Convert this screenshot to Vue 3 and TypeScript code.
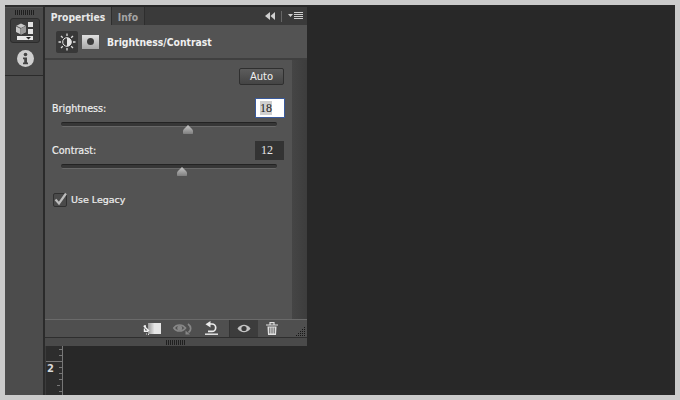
<script setup lang="ts">
const sliders = [
  { label: 'Brightness:', value: '18', pos: 122, active: true },
  { label: 'Contrast:', value: '12', pos: 116, active: false },
]
const ticks = [0, 1, 2, 3, 4, 5, 6, 7]
</script>

<template>
  <div class="frame">
    <aside class="dock">
      <div class="dock-top">
        <div class="grip dock-grip"></div>
        <div class="dock-btn">
          <svg width="20" height="18" viewBox="0 0 20 18">
            <path d="M1 4 6 1.500 11 4v6l-5 2.500L1 10z" fill="#c8c8c8" />
            <path d="M1 4 6 6.500 11 4M6 6.500v6" fill="none" stroke="#555" stroke-width="1" />
            <path d="M6 6.500 11 4v6l-5 2.500z" fill="#9a9a9a" />
            <rect x="13" y="0" width="5" height="5" fill="#e4e4e4" />
            <rect x="13" y="7" width="5" height="5" fill="#e4e4e4" />
            <rect x="2" y="14" width="16" height="4" fill="#e8e8e8" />
            <path d="M11 15h5l-2.500 2.500z" fill="#222" />
          </svg>
        </div>
        <svg class="info" width="17" height="17" viewBox="0 0 17 17">
          <circle cx="8.500" cy="8.500" r="8.500" fill="#cfcfcf" />
          <circle cx="8.500" cy="4.500" r="1.800" fill="#444" />
          <path d="M6 7.500h4v5h1v1.800H6v-1.800h1.200V9.200H6z" fill="#444" />
        </svg>
      </div>
    </aside>
    <div class="column">
      <section class="panel">
        <header class="tabs">
          <div class="tab tab-on">Properties</div>
          <div class="tab tab-off">Info</div>
          <div class="tab-fill">
            <svg width="10" height="8" viewBox="0 0 10 8"><path d="M5 0v8L0 4zM10 0v8L5.500 4z" fill="#d0d0d0" /></svg>
            <span class="tab-div"></span>
            <svg width="16" height="8" viewBox="0 0 16 8">
              <path d="M0 2h5L2.500 5z" fill="#d0d0d0" />
              <path d="M6 0.500h9M6 2.500h9M6 4.500h9M6 6.500h9" stroke="#d0d0d0" stroke-width="1" />
            </svg>
          </div>
        </header>
        <div class="title-row">
          <div class="adj-icon">
            <svg width="18" height="18" viewBox="0 0 18 18">
              <circle cx="9" cy="9" r="4.300" fill="#3a3a3a" stroke="#e4e4e4" stroke-width="1" />
              <path d="M9 4.700a4.300 4.300 0 0 1 0 8.600z" fill="#e4e4e4" />
              <path d="M9 .5v2.500M9 15v2.500M.5 9H3M15 9h2.500M3 3l1.800 1.800M13.200 13.200 15 15M3 15l1.800-1.800M13.200 4.800 15 3" stroke="#dcdcdc" stroke-width="1.300" />
            </svg>
          </div>
          <div class="mask"><span></span></div>
          <div class="title">Brightness/Contrast</div>
        </div>
        <div class="body">
          <div class="controls">
            <div class="auto-row"><div class="auto">Auto</div></div>
            <div v-for="s in sliders" :key="s.label" class="slider-block">
              <div class="slider-head">
                <span class="label">{{ s.label }}</span>
                <div class="num" :class="{ 'num-on': s.active }"><span>{{ s.value }}</span></div>
              </div>
              <div class="track">
                <svg class="thumb" :style="{ left: s.pos + 'px' }" width="10" height="9" viewBox="0 0 10 9">
                  <defs>
                    <linearGradient id="tg" x1="0" y1="0" x2="0" y2="1">
                      <stop offset="0" stop-color="#c8c8c8" />
                      <stop offset="1" stop-color="#7e7e7e" />
                    </linearGradient>
                  </defs>
                  <path d="M5 0 9 4 10 5.500V8.500L9.500 9H.5L0 8.500V5.500L1 4z" fill="url(#tg)" />
                </svg>
              </div>
            </div>
            <div class="legacy">
              <div class="check">
                <svg class="tick" width="15" height="14" viewBox="0 0 15 14">
                  <path d="M2.500 7.500 6 11.500 13 1.500" fill="none" stroke="#bcbcbc" stroke-width="2.200" />
                </svg>
              </div>
              <span class="label">Use Legacy</span>
            </div>
          </div>
          <div class="scroll"></div>
        </div>
        <footer class="foot">
          <div class="foot-icons">
            <svg class="fi first" width="18" height="13" viewBox="0 0 18 13">
              <defs>
                <linearGradient id="fg" x1="0" y1="0" x2="1" y2="0">
                  <stop offset="0" stop-color="#9a9a9a" />
                  <stop offset=".5" stop-color="#e6e6e6" />
                </linearGradient>
              </defs>
              <rect x="5" y="1" width="13" height="11" fill="url(#fg)" />
              <path d="M.8 4 6 9M1.500 6.500V9.300H5M.8 4H3" stroke="#f4f4f4" stroke-width="1.400" fill="none" />
              <path d="M3 11.500h1v1H3zM5 12h1v1H5z" fill="#dedede" />
            </svg>
            <svg class="fi second" width="19" height="12" viewBox="0 0 19 12">
              <path d="M.8 5C3.500 1 9.500 1 12.500 5 9.500 9 3.500 9 .8 5z" fill="none" stroke="#868686" stroke-width="1.700" />
              <circle cx="6.700" cy="5" r="2.500" fill="#868686" />
              <path d="M15 1c3.500 2.500 3.500 6.500.5 8.500" fill="none" stroke="#868686" stroke-width="1.700" />
              <path d="M12.500 7.500v4h4.500z" fill="#868686" />
            </svg>
            <svg class="fi third" width="15" height="14" viewBox="0 0 15 14">
              <path d="M5.500 3H8a3.700 3.700 0 0 1 0 7.400H4" fill="none" stroke="#ececec" stroke-width="1.700" />
              <path d="M6.500 0v6.500L1.500 3.200z" fill="#ececec" />
              <path d="M1 13.200h13" stroke="#ececec" stroke-width="1.400" />
            </svg>
            <div class="eye-on">
              <svg width="14" height="9" viewBox="0 0 14 9">
                <path d="M.5 4.500C4-.5 10-.5 13.500 4.500 10 9.500 4 9.500 .5 4.500z" fill="#c4c4c4" />
                <circle cx="7" cy="4.500" r="2.600" fill="#3a3a3a" />
              </svg>
            </div>
            <svg class="fi trash" width="12" height="13" viewBox="0 0 12 13">
              <path d="M0 3h12M4 2.500V.7h4v1.800" fill="none" stroke="#e0e0e0" stroke-width="1.200" />
              <path d="M1.500 4.500h9L10 13H2z" fill="#e0e0e0" />
              <path d="M3.800 5.500v6M6 5.500v6M8.200 5.500v6" stroke="#4c4c4c" stroke-width=".9" />
            </svg>
          </div>
          <svg class="resize" width="10" height="10" viewBox="0 0 10 10">
            <path d="M8 0h1v1H8zM6 2h1v1H6zM8 2h1v1H8zM4 4h1v1H4zM6 4h1v1H6zM8 4h1v1H8zM2 6h1v1H2zM4 6h1v1H4zM6 6h1v1H6zM8 6h1v1H8zM0 8h1v1H0zM2 8h1v1H2zM4 8h1v1H4zM6 8h1v1H6zM8 8h1v1H8z" fill="#161616" />
          </svg>
        </footer>
        <div class="panel-grip"><div class="grip foot-grip"></div></div>
      </section>
      <div class="ruler">
        <svg width="18" height="49" viewBox="0 0 18 49">
          <path d="M16.500 0v49" stroke="#777" stroke-width="1" />
          <path d="M0 15.500h16" stroke="#777" stroke-width="1" />
          <path v-for="t in ticks" :key="t" :d="`M${t === 6 ? 11 : 13} ${3.5 + t * 6}h3`" stroke="#777" stroke-width="1" />
        </svg>
        <span class="ruler-num">2</span>
      </div>
    </div>
  </div>
</template>

<style>
html, body { margin: 0; background: #cbcbcb; }
</style>

<style scoped>
.frame {
  box-sizing: border-box;
  margin: 5px;
  width: 670px;
  height: 390px;
  background: #282828;
  display: flex;
  font-family: "DejaVu Sans", sans-serif;
  overflow: hidden;
}
.dock {
  box-sizing: border-box;
  width: 40px;
  padding-top: 2px;
  background: #2f2f2f;
  flex: none;
  border-right: 2px solid #2b2b2b;
}
.dock-top {
  height: 67px;
  box-sizing: content-box;
  padding-left: 2px;
  background: #4a4a4a;
  border-top: 1px solid #555;
  border-bottom: 1px solid #2b2b2b;
  display: flex;
  flex-direction: column;
  align-items: center;
}
.dock::after {
  content: "";
  display: block;
  height: 319px;
  background: #4c4c4c;
}
.grip {
  background: repeating-linear-gradient(90deg, #1f1f1f 0 1px, transparent 1px 2px);
  height: 5px;
}
.dock-grip { width: 20px; margin-top: 2px; }
.dock-btn {
  width: 30px;
  height: 25px;
  box-sizing: border-box;
  margin-top: 3px;
  background: #3d3d3d;
  border: 1px solid #2c2c2c;
  border-radius: 3px;
  display: flex;
  align-items: center;
  justify-content: center;
}
.info { margin-top: 7px; }
.column { width: 262px; flex: none; display: flex; flex-direction: column; }
.panel {
  margin-top: 2px;
  height: 339px;
  background: #535353;
  display: flex;
  flex-direction: column;
  flex: none;
}
.tabs { height: 18px; display: flex; background: #3a3a3a; flex: none; }
.tab {
  font-size: 10.300px;
  font-stretch: condensed;
  font-weight: 700;
  line-height: 18px;
  padding-top: 1px;
  text-align: center;
  box-sizing: border-box;
}
.tab-on { width: 66px; background: #535353; color: #e8e8e8; }
.tab-off { width: 34px; background: #424242; color: #a4a4a4; border-left: 1px solid #2e2e2e; border-right: 1px solid #2e2e2e; }
.tab-fill {
  flex: 1;
  display: flex;
  align-items: center;
  justify-content: flex-end;
  gap: 6px;
  padding-right: 3px;
}
.tab-div { width: 1px; height: 11px; background: #666; }
.title-row {
  height: 35px;
  box-sizing: border-box;
  display: flex;
  align-items: center;
  padding-left: 11px;
  border-bottom: 2px solid #3f3f3f;
  flex: none;
  background: #535353;
}
.adj-icon {
  width: 22px;
  height: 22px;
  background: #383838;
  border-radius: 2px;
  display: flex;
  align-items: center;
  justify-content: center;
}
.mask {
  width: 17px;
  height: 14px;
  margin-left: 4px;
  background: linear-gradient(#e0e0e0, #a8a8a8);
  display: flex;
  align-items: center;
  justify-content: center;
}
.mask span { width: 7px; height: 7px; border-radius: 50%; background: #3c3c3c; }
.title { margin-left: 8px; color: #f0f0f0; font-size: 10.300px; font-stretch: condensed; font-weight: 700; }
.body { flex: 1; display: flex; min-height: 0; }
.controls { flex: 1; box-sizing: border-box; padding: 8px 8px 0 7px; }
.scroll { width: 15px; background: linear-gradient(90deg, #454545, #3d3d3d); }
.auto-row { display: flex; justify-content: flex-end; margin-bottom: 14px; }
.auto {
  width: 45px;
  height: 17px;
  box-sizing: border-box;
  border: 1px solid #2f2f2f;
  border-radius: 2px;
  background: linear-gradient(#5c5c5c, #444);
  color: #f0f0f0;
  font-size: 10px;
  text-align: center;
  line-height: 15px;
}
.slider-block { margin-bottom: 14px; }
.slider-head { display: flex; justify-content: space-between; align-items: flex-start; height: 19px; }
.label { color: #eee; font-size: 9.600px; line-height: 19px; -webkit-text-stroke: 0.2px #eee; }
.num {
  width: 29px;
  height: 19px;
  box-sizing: border-box;
  background: #333;
  color: #e8e8e8;
  font: 12px/19px "Liberation Serif", serif;
  padding-left: 6px;
}
.num-on {
  width: 30px;
  height: 20px;
  margin: -1px -1px 0 0;
  background: #fff;
  color: #222;
  border: 1px solid #3a5a9c;
  line-height: 18px;
  padding-left: 4px;
}
.num-on span { background: #cfcfcf; }
.track {
  position: relative;
  height: 5px;
  box-sizing: border-box;
  margin: 4px 7px 0 9px;
  background: #363636;
  border-radius: 2px;
  border-top: 1px solid #232323;
  border-bottom: 1px solid #686868;
}
.thumb { position: absolute; top: 2px; }
.legacy { display: flex; align-items: center; gap: 4px; margin-top: 21px; }
.legacy .label { font-size: 9.500px; }
.check {
  position: relative;
  width: 14px;
  height: 14px;
  box-sizing: border-box;
  background: #4a4a4a;
  border: 1px solid #303030;
  border-radius: 2px;
  margin-left: 1px;
}
.tick { position: absolute; left: -1px; top: -2px; }
.foot {
  height: 19px;
  flex: none;
  box-sizing: border-box;
  border-top: 1px solid #6a6a6a;
  border-bottom: 1px solid #2e2e2e;
  display: flex;
  align-items: center;
  justify-content: flex-end;
  background: #4f4f4f;
  position: relative;
}
.foot-icons { display: flex; align-items: center; height: 100%; margin-right: 29px; }
.second { margin-left: 12px; }
.third { margin-left: 12px; margin-top: -2px; }
.eye-on {
  width: 29px;
  height: 100%;
  box-sizing: border-box;
  background: #3c3c3c;
  border-left: 1px solid #333;
  margin-left: 10px;
  display: flex;
  align-items: center;
  justify-content: center;
}
.trash { margin-left: 8px; }
.resize { position: absolute; right: 1px; bottom: 0; }
.panel-grip {
  height: 8px;
  flex: none;
  background: #4a4a4a;
  display: flex;
  justify-content: center;
  align-items: center;
}
.foot-grip { width: 20px; height: 5px; }
.ruler { flex: 1; position: relative; width: 18px; background: #2d2d2d; border-left: 1px solid #3c3c3c; box-sizing: border-box; }
.ruler svg { display: block; }
.ruler-num {
  position: absolute;
  left: 1px;
  top: 16px;
  color: #d8d8d8;
  font-size: 10px;
  line-height: 13px;
  font-weight: 700;
}
</style>
